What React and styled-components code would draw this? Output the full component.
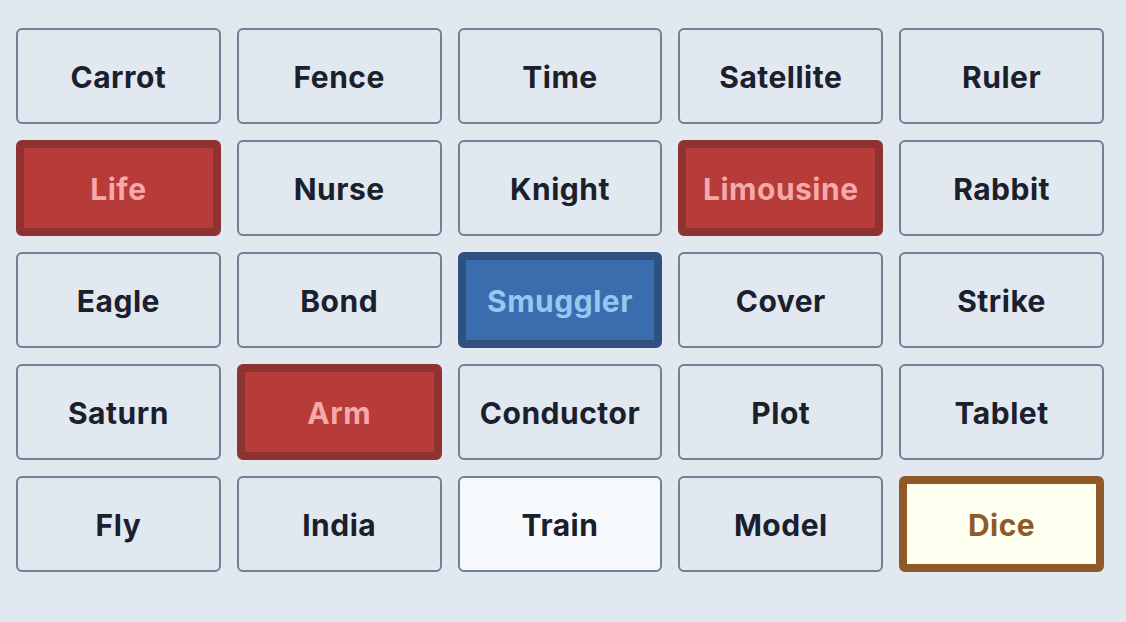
import React from 'react';
import styled, {createGlobalStyle, css} from 'styled-components';

const GlobalStyle = createGlobalStyle`
  html, body {
    margin: 0;
    padding: 0;
    background: #e2e8f0;
    font-family: Inter, "Noto Sans", "Liberation Sans", sans-serif;
  }
`;

const Board = styled.div`
  display: grid;
  grid-template-columns: repeat(5, 1fr);
  gap: 16px;
  width: 1088px;
  padding: 28px 16px;
`;

const variants = {
  plain: css`
    background: #e2e8f0;
    border: 2px solid #718096;
    color: #1a202c;
  `,
  open: css`
    background: #f7fafc;
    border: 2px solid #718096;
    color: #1a202c;
  `,
  red: css`
    background: #b73b39;
    border: 8px solid #8e3331;
    color: #f5a9a8;
  `,
  blue: css`
    background: #3b6cad;
    border: 8px solid #30517f;
    color: #92c9f1;
  `,
  gold: css`
    background: #fffff0;
    border: 8px solid #8f5a28;
    color: #8f5a28;
  `,
};

const Card = styled.div`
  box-sizing: border-box;
  height: 96px;
  border-radius: 6px;
  display: flex;
  align-items: center;
  justify-content: center;
  padding-top: 2px;
  font-size: 30px;
  font-weight: 700;
  letter-spacing: 0.5px;
  ${p => variants[p.$kind]}
`;

const words = [
  ['Carrot', 'plain'], ['Fence', 'plain'], ['Time', 'plain'], ['Satellite', 'plain'], ['Ruler', 'plain'],
  ['Life', 'red'], ['Nurse', 'plain'], ['Knight', 'plain'], ['Limousine', 'red'], ['Rabbit', 'plain'],
  ['Eagle', 'plain'], ['Bond', 'plain'], ['Smuggler', 'blue'], ['Cover', 'plain'], ['Strike', 'plain'],
  ['Saturn', 'plain'], ['Arm', 'red'], ['Conductor', 'plain'], ['Plot', 'plain'], ['Tablet', 'plain'],
  ['Fly', 'plain'], ['India', 'plain'], ['Train', 'open'], ['Model', 'plain'], ['Dice', 'gold'],
];

export default function App() {
  return (
    <>
      <GlobalStyle/>
      <Board>
        {words.map(([word, kind]) => (
          <Card key={word} $kind={kind}>{word}</Card>
        ))}
      </Board>
    </>
  );
}
